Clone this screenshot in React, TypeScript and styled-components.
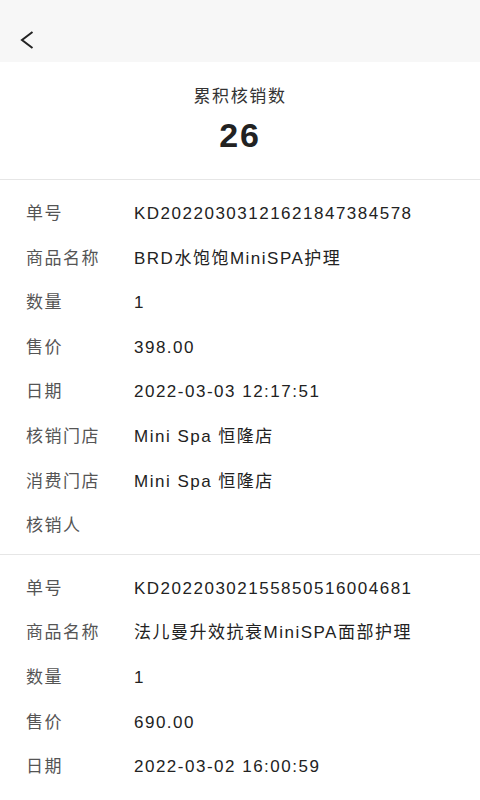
import React from 'react';
import styled, { createGlobalStyle } from 'styled-components';

const GlobalStyle = createGlobalStyle`
  html, body {
    margin: 0;
    padding: 0;
    background: #fff;
    font-family: "Liberation Sans", "Noto Sans CJK SC", sans-serif;
  }
`;

interface Record {
  orderNo: string;
  product: string;
  quantity: string;
  price: string;
  date: string;
  verifyStore: string;
  consumeStore: string;
  verifier: string;
}

const records: Record[] = [
  {
    orderNo: 'KD20220303121621847384578',
    product: 'BRD水饱饱MiniSPA护理',
    quantity: '1',
    price: '398.00',
    date: '2022-03-03 12:17:51',
    verifyStore: 'Mini Spa 恒隆店',
    consumeStore: 'Mini Spa 恒隆店',
    verifier: '',
  },
  {
    orderNo: 'KD20220302155850516004681',
    product: '法儿曼升效抗衰MiniSPA面部护理',
    quantity: '1',
    price: '690.00',
    date: '2022-03-02 16:00:59',
    verifyStore: 'Mini Spa 恒隆店',
    consumeStore: 'Mini Spa 恒隆店',
    verifier: '',
  },
];

const Page = styled.div`
  width: 480px;
  height: 800px;
  overflow: hidden;
  background: #fff;
`;

const TopBar = styled.div`
  height: 62px;
  background: #f7f7f7;
  display: flex;
  align-items: center;
  padding-left: 17px;
  padding-top: 18px;
  box-sizing: border-box;
`;

const BackButton = styled.button`
  border: none;
  background: none;
  padding: 0;
  width: 20px;
  height: 22px;
  display: flex;
  align-items: center;
  justify-content: center;
`;

const Summary = styled.div`
  height: 118px;
  display: flex;
  flex-direction: column;
  align-items: center;
  padding-top: 23px;
  box-sizing: border-box;
  border-bottom: 1px solid #e6e6e6;
`;

const SummaryTitle = styled.div`
  font-size: 17px;
  letter-spacing: 1.6px;
  color: #333;
  line-height: 24px;
`;

const SummaryCount = styled.div`
  margin-top: 9px;
  font-size: 34px;
  font-weight: bold;
  color: #222;
  line-height: 34px;
  letter-spacing: 1.8px;
`;

const Section = styled.div`
  padding: 12px 0 5px;
  border-bottom: 1px solid #e6e6e6;
`;

const Row = styled.div`
  height: 44.6px;
  line-height: 44.6px;
  display: flex;
  align-items: baseline;
  padding-left: 26px;
  font-size: 17px;
  letter-spacing: 1.5px;
`;

const Label = styled.span`
  width: 108px;
  flex-shrink: 0;
  color: #555;
`;

const Value = styled.span`
  color: #222;
  white-space: nowrap;
`;

const fields: [string, keyof Record][] = [
  ['单号', 'orderNo'],
  ['商品名称', 'product'],
  ['数量', 'quantity'],
  ['售价', 'price'],
  ['日期', 'date'],
  ['核销门店', 'verifyStore'],
  ['消费门店', 'consumeStore'],
  ['核销人', 'verifier'],
];

export default function App() {
  return (
    <Page>
      <GlobalStyle />
      <TopBar>
        <BackButton>
          <svg width="16" height="20" viewBox="0 0 16 20">
            <path d="M13.5 2 L3 10 L13.5 18" fill="none" stroke="#222" strokeWidth="2" />
          </svg>
        </BackButton>
      </TopBar>
      <Summary>
        <SummaryTitle>累积核销数</SummaryTitle>
        <SummaryCount>26</SummaryCount>
      </Summary>
      {records.map((r, i) => (
        <Section key={i}>
          {fields.map(([label, key]) => (
            <Row key={key}>
              <Label>{label}</Label>
              <Value>{r[key]}</Value>
            </Row>
          ))}
        </Section>
      ))}
    </Page>
  );
}
